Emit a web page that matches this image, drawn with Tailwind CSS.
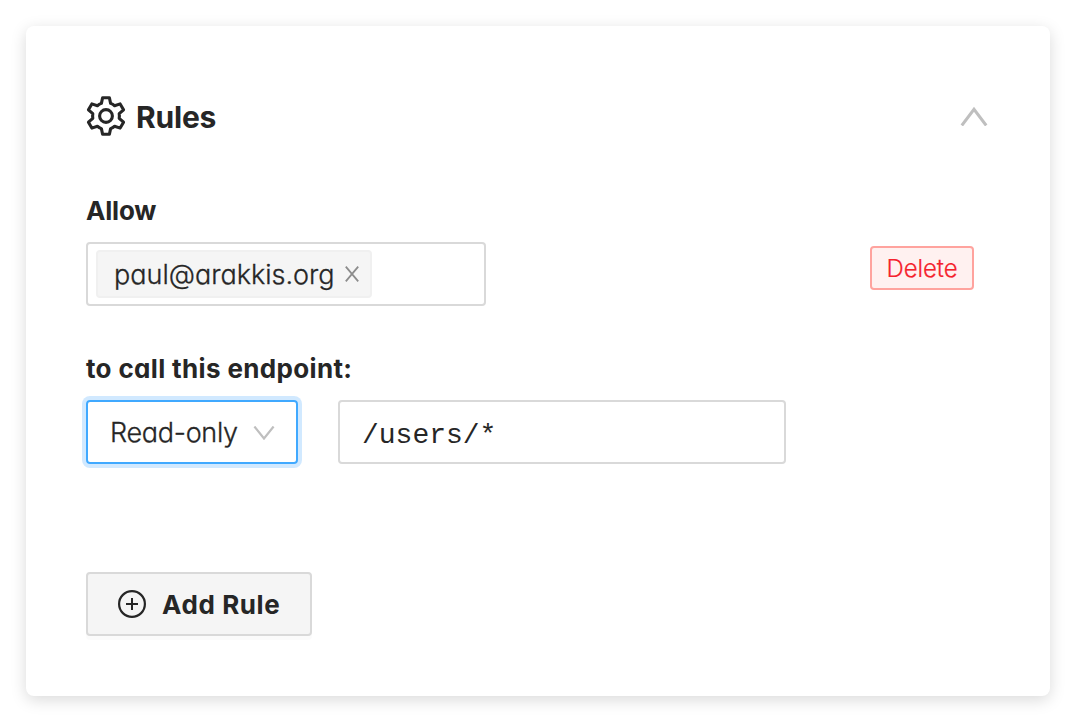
<!DOCTYPE html>
<html lang="en">
<head>
<meta charset="utf-8">
<title>Rules</title>
<script src="https://cdn.jsdelivr.net/npm/@tailwindcss/browser@4"></script>
</head>
<body class="bg-white pt-[26px] pl-[26px] h-[726px] overflow-hidden font-['Inter','Lato',sans-serif] text-[#262626] [font-feature-settings:'cv11']">
<main class="w-[1024px] h-[670px] rounded-lg bg-white px-[60px] pt-[70px] shadow-[0_4px_16px_rgba(0,0,0,0.15)]">
  <header class="flex h-10 items-center">
    <svg class="size-10 shrink-0" viewBox="-20 -20 40 40" fill="none" stroke="currentColor" stroke-width="3.1" stroke-linejoin="round">
      <path d="M-3.4-18.3H3.4L4.6-12.6Q6.8-11.8 8.6-10.3L14.15-12.1 17.55-6.2 13.2-2.3Q13.6 0 13.2 2.3L17.55 6.2 14.15 12.1 8.6 10.3Q6.8 11.8 4.6 12.6L3.4 18.3H-3.4L-4.6 12.6Q-6.8 11.8-8.6 10.3L-14.15 12.1-17.55 6.2-13.2 2.3Q-13.6 0-13.2-2.3L-17.55-6.2-14.15-12.1-8.6-10.3Q-6.8-11.8-4.6-12.6Z"/>
      <circle r="6.4"/>
    </svg>
    <h1 class="ml-2.5 text-[30px] leading-10 font-bold tracking-[-0.2px] pt-0.5">Rules</h1>
    <svg class="mr-0.5 ml-auto h-5 w-7 shrink-0" viewBox="0 0 28 20" fill="none" stroke="#bfbfbf" stroke-width="3"><path d="M1.8 19.5 14 3.3 26.2 19.5"/></svg>
  </header>
  <h2 class="mt-[59px] h-8 text-[26px] leading-8 font-bold tracking-[-0.2px]">Allow</h2>
  <div class="mt-[15px] flex items-start">
    <div class="flex h-16 w-[400px] items-center rounded border-2 border-[#d9d9d9] px-2">
      <div class="flex h-12 w-[276px] items-center rounded border-2 border-[#f0f0f0] bg-[#f5f5f5] pl-4">
        <span class="w-[231px] whitespace-nowrap pt-px text-[27px] leading-10 font-light [-webkit-text-stroke:0.3px_currentColor]">paul@arakkis.org</span>
        <svg class="h-4 w-[14px]" viewBox="0 0 14 16" fill="none" stroke="#8c8c8c" stroke-width="1.8"><path d="M.8.7 13.2 15.3M13.2.7.8 15.3"/></svg>
      </div>
    </div>
    <button class="mt-1 ml-[384px] h-11 w-[104px] rounded border-2 border-[#ffa39e] bg-[#fff1f0] pt-px text-[24px] leading-[39px] font-light tracking-[-0.1px] text-[#f5222d] [-webkit-text-stroke:0.2px_currentColor]">Delete</button>
  </div>
  <h2 class="mt-[47px] h-8 text-[26px] leading-8 font-bold tracking-[0.35px]">to call this endpoint:</h2>
  <div class="mt-[15px] flex gap-10">
    <div class="flex h-16 w-[212px] items-center rounded border-2 border-[#40a9ff] pl-[22px] shadow-[0_0_0_4px_rgba(24,144,255,0.2)]">
      <span class="w-[143px] whitespace-nowrap pt-0.5 text-[27px] leading-10 font-light tracking-[-0.3px] [-webkit-text-stroke:0.3px_currentColor]">Read-only</span>
      <svg class="mt-0.5 h-[14px] w-[22px]" viewBox="0 0 22 14" fill="none" stroke="#bfbfbf" stroke-width="2.2"><path d="M1.4.5 11 12.5 20.6.5"/></svg>
    </div>
    <div class="flex h-16 w-[448px] items-center rounded border-2 border-[#d9d9d9] pt-2 pl-[22px] font-['Courier_New','Liberation_Mono',monospace] text-[28px]">/users/*</div>
  </div>
  <button class="mt-[108px] flex h-16 w-[226px] items-center rounded border-2 border-[#d9d9d9] bg-[#f5f5f5] pl-[30px] shadow-[0_4px_0_rgba(0,0,0,0.016)]">
    <svg class="size-7" viewBox="0 0 28 28" fill="none" stroke="currentColor" stroke-width="2.2"><circle cx="14" cy="14" r="12.9"/><path stroke-width="2" d="M8 14H20M14 8V20"/></svg>
    <span class="ml-4 whitespace-nowrap pt-px text-[26px] leading-10 font-bold tracking-[0.6px]">Add Rule</span>
  </button>
</main>
</body>
</html>
